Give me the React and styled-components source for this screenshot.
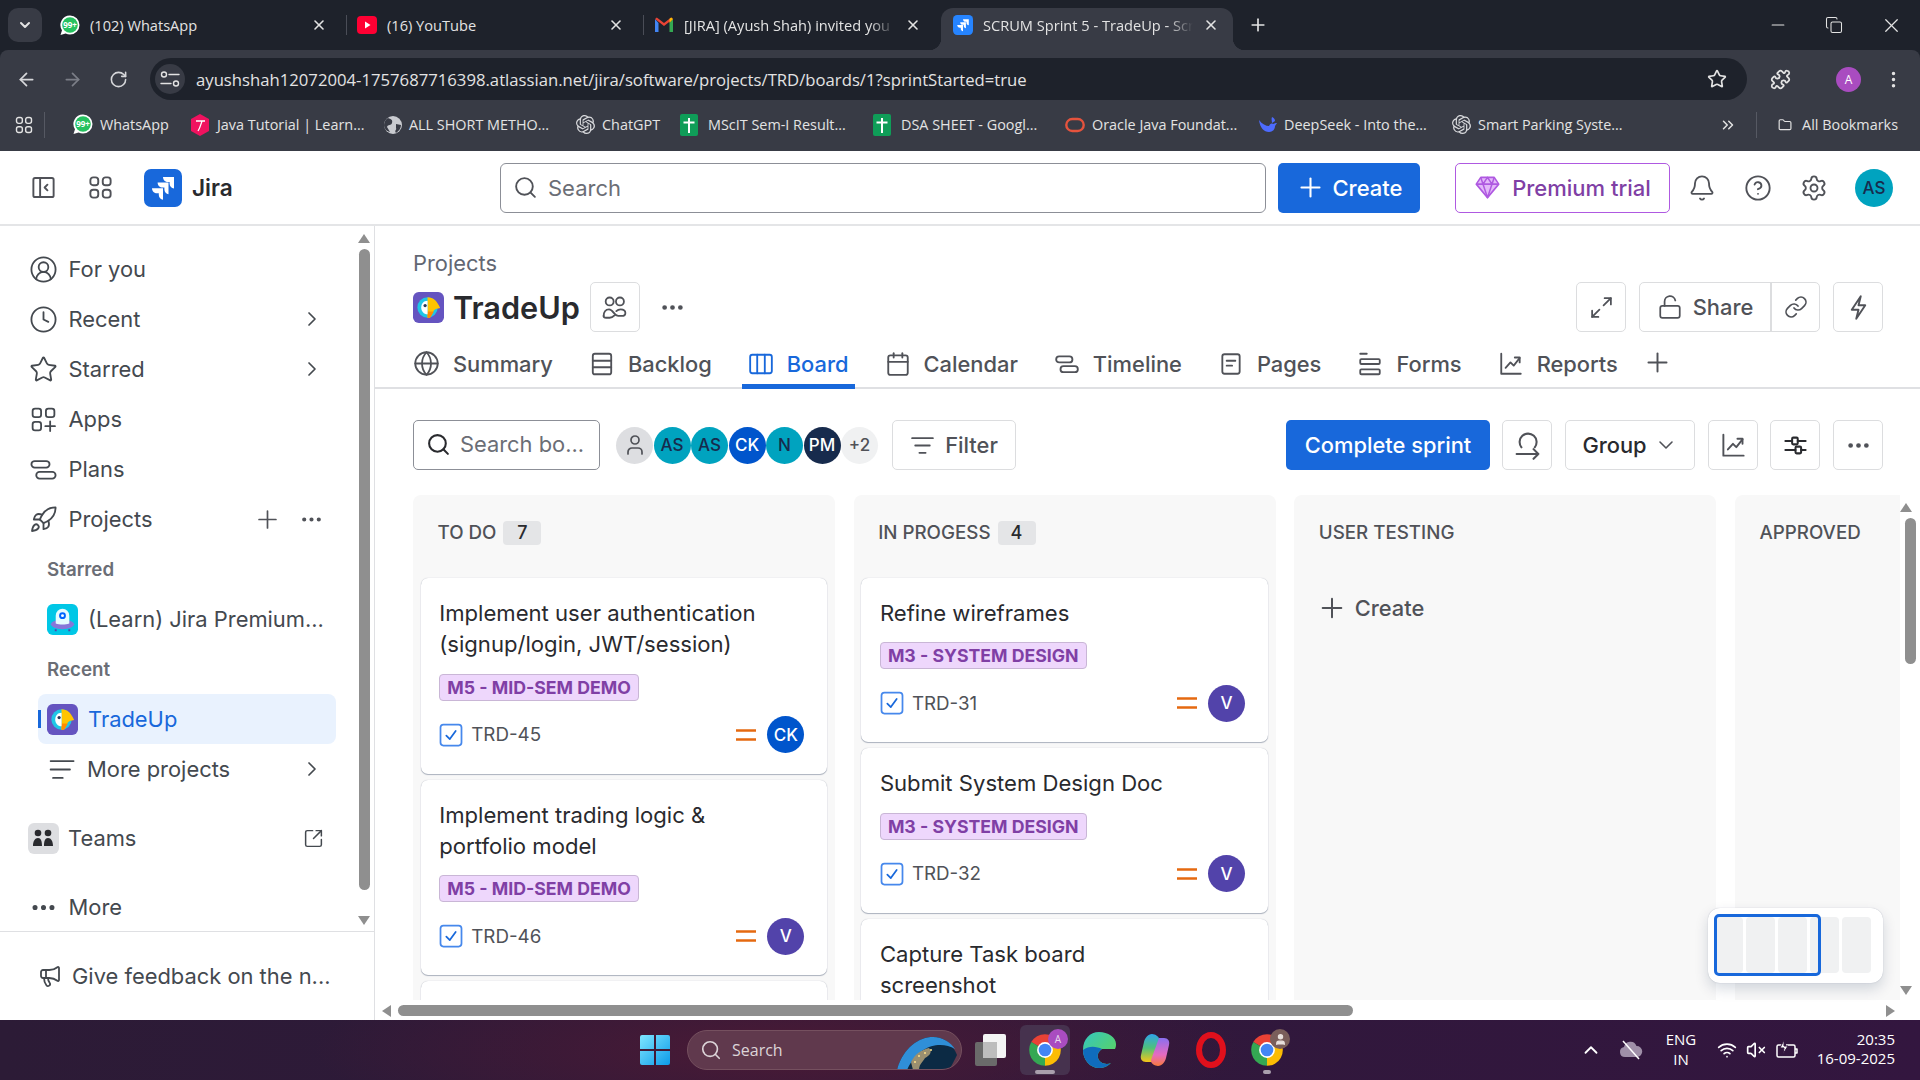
import React from 'react';
import styled, { createGlobalStyle } from 'styled-components';
import {
  ArrowLeft, ArrowRight, Bell, Calendar, ChevronDown, ChevronRight, ChevronUp,
  ChevronsRight, CircleHelp, CircleUserRound, Clock, Copy, Ellipsis, EllipsisVertical,
  Folder, Globe, Link, LockOpen, Maximize2, Megaphone, Minus, Plus, Puzzle, Rocket, RotateCw,
  Search, Settings, SquareArrowOutUpRight, Star, User,
  VolumeX, Wifi, X,
} from 'lucide-react';
import { SiOpenai } from 'react-icons/si';

const GlobalStyle = createGlobalStyle`
  html, body { margin: 0; width: 1920px; height: 1080px; overflow: hidden; background: #fff; }
  * { box-sizing: border-box; }
  #root { width: 1920px; height: 1080px; }
`;

const Page = styled.div`
  width: 1920px;
  height: 1080px;
  display: flex;
  flex-direction: column;
  font-family: Inter, "Liberation Sans", sans-serif;
  color: #44494f;
`;

/* browser chrome */
const Browser = styled.div`
  height: 151px;
  flex-shrink: 0;
  background: #1e222b;
  font-family: "Open Sans", "Noto Sans", sans-serif;
  color: #e3e3e3;
`;
const TabStrip = styled.div`
  height: 50px;
  display: flex;
  align-items: flex-end;
  padding-left: 8px;
`;
const TabMenu = styled.div`
  width: 34px;
  height: 34px;
  margin-bottom: 8px;
  margin-right: 8px;
  border-radius: 10px;
  background: #383b45;
  display: flex;
  align-items: center;
  justify-content: center;
`;
const Tab = styled.div`
  position: relative;
  width: ${(p) => (p.$active ? 292 : 297)}px;
  height: 42px;
  padding-left: ${(p) => (p.$active ? 12 : 10)}px;
  padding-right: ${(p) => (p.$active ? 14 : 20)}px;
  padding-bottom: 8px;
  display: flex;
  align-items: center;
  gap: 10px;
  font-size: 14.6px;
  background: ${(p) => (p.$active ? '#383b45' : 'transparent')};
  border-radius: 12px 12px 0 0;
  &::after {
    content: '';
    position: absolute;
    right: 0;
    top: 7px;
    height: 20px;
    width: ${(p) => (p.$sep ? 1 : 0)}px;
    background: #4a4d57;
  }
  ${(p) => p.$active && `
    &::before, & > i {
      content: '';
      position: absolute;
      bottom: 0;
      width: 12px;
      height: 12px;
    }
    &::before { left: -12px; background: radial-gradient(circle at 0 0, transparent 12px, #383b45 12.5px); }
    & > i { right: -12px; background: radial-gradient(circle at 100% 0, transparent 12px, #383b45 12.5px); }
  `}
`;
const TabTitle = styled.span`
  flex: 1;
  overflow: hidden;
  white-space: nowrap;
  -webkit-mask-image: ${(p) => (p.$fade ? 'linear-gradient(90deg, #000 88%, transparent)' : 'none')};
`;
const NewTab = styled.div`
  margin: 0 0 8px 15px;
  height: 34px;
  display: flex;
  align-items: center;
`;
const WindowButtons = styled.div`
  margin-left: auto;
  height: 50px;
  display: flex;
  align-items: center;
  gap: 37px;
  padding-right: 17px;
`;
const Toolbar = styled.div`
  height: 50px;
  background: #383b45;
  display: flex;
  align-items: flex-end;
  padding-left: 3px;
  border-radius: 8px 8px 0 0;
`;
const NavButton = styled.div`
  width: 46px;
  height: 42px;
  display: flex;
  align-items: center;
  justify-content: center;
  color: ${(p) => (p.$dim ? '#7b7e87' : '#d6d7da')};
`;
const Omnibox = styled.div`
  width: 1597px;
  height: 42px;
  margin-left: 9px;
  border-radius: 21px;
  background: #1e222b;
  display: flex;
  align-items: center;
  padding: 0 20px 0 5px;
  font-size: 16.7px;
`;
const SiteChip = styled.div`
  width: 30px;
  height: 30px;
  border-radius: 50%;
  background: #383b45;
  display: flex;
  align-items: center;
  justify-content: center;
  margin-right: 11px;
`;
const Url = styled.span`
  flex: 1;
  white-space: nowrap;
`;
const ToolbarEnd = styled.div`
  flex: 1;
  height: 42px;
  display: flex;
  align-items: center;
  padding-left: 23px;
`;
const ProfileDot = styled.div`
  width: 25px;
  height: 25px;
  margin: 0 22px 0 45px;
  border-radius: 50%;
  background: #a94cc0;
  color: #fff;
  font-size: 12px;
  display: flex;
  align-items: center;
  justify-content: center;
`;
const Bookmarks = styled.div`
  height: 51px;
  background: #383b45;
  display: flex;
  align-items: center;
  padding: 0 0 2px 14px;
  font-size: 14.4px;
`;
const BarSep = styled.div`
  width: 1px;
  height: 26px;
  background: #565963;
  margin: 0 ${(p) => p.$right}px 0 ${(p) => p.$left}px;
`;
const Bookmark = styled.div`
  width: ${(p) => p.$w}px;
  flex-shrink: 0;
  display: flex;
  align-items: center;
  gap: ${(p) => p.$gap || 7}px;
  white-space: nowrap;
`;

/* jira top bar */
const TopBar = styled.div`
  height: 75px;
  flex-shrink: 0;
  border-bottom: 2px solid #e4e5e7;
  background: #fff;
  display: flex;
  align-items: center;
`;
const TopLeft = styled.div`
  width: 500px;
  padding-left: 30px;
  display: flex;
  align-items: center;
  gap: 30px;
  color: #505258;
`;
const BrandBox = styled.div`
  display: flex;
  align-items: center;
`;
const Brand = styled.span`
  margin-left: 10px;
  font-size: 22.6px;
  font-weight: 600;
  color: #292a2e;
`;
const GlobalSearch = styled.div`
  width: 766px;
  height: 50px;
  border: 1px solid #8c8f97;
  border-radius: 6px;
  display: flex;
  align-items: center;
  gap: 10px;
  padding-left: 12px;
  font-size: 22px;
  color: #6b6e76;
`;
const CreateButton = styled.div`
  width: 142px;
  height: 50px;
  margin-left: 12px;
  border-radius: 5px;
  background: #1868db;
  color: #fff;
  font-size: 22px;
  font-weight: 500;
  display: flex;
  align-items: center;
  justify-content: center;
  gap: 6px;
`;
const PremiumButton = styled.div`
  width: 215px;
  height: 50px;
  margin: 0 4px 0 35px;
  border: 1px solid #af59e1;
  border-radius: 5px;
  color: #803fa5;
  font-size: 22px;
  font-weight: 500;
  display: flex;
  align-items: center;
  justify-content: center;
  gap: 11px;
`;
const TopIcon = styled.div`
  width: 56px;
  display: flex;
  justify-content: center;
  color: #505258;
`;
const TopAvatar = styled.div`
  width: 38px;
  height: 38px;
  margin-left: 13px;
  border-radius: 50%;
  background: #00a3bf;
  color: #172b4d;
  font-size: 17px;
  font-weight: 500;
  display: flex;
  align-items: center;
  justify-content: center;
`;

const Body = styled.div`
  flex: 1;
  min-height: 0;
  display: flex;
`;

/* sidebar */
const Sidebar = styled.aside`
  position: relative;
  width: 375px;
  flex-shrink: 0;
  border-right: 1.5px solid #dfe0e3;
  display: flex;
  flex-direction: column;
  font-size: 21.9px;
`;
const SideNav = styled.nav`
  height: 706px;
  padding-top: 18px;
  border-bottom: 1.5px solid #dfe0e3;
  overflow: hidden;
`;
const SideRow = styled.div`
  position: relative;
  height: 50px;
  display: flex;
  align-items: center;
  gap: 11px;
  margin-top: ${(p) => p.$top || 0}px;
  margin-left: ${(p) => (p.$child ? 38 : 0)}px;
  margin-right: 38px;
  width: ${(p) => (p.$child ? 298 : 336)}px;
  padding-left: ${(p) => (p.$child ? 9 : 28.5)}px;
  padding-right: 12px;
  border-radius: 8px;
  background: ${(p) => (p.$selected ? '#e9f2fe' : 'transparent')};
  color: ${(p) => (p.$selected ? '#1868db' : '#44494f')};
  &::before {
    content: '';
    display: ${(p) => (p.$selected ? 'block' : 'none')};
    position: absolute;
    left: 0;
    top: 16px;
    width: 3px;
    height: 18px;
    background: #1868db;
  }
`;
const SideLabel = styled.span`
  flex: 1;
  white-space: nowrap;
  margin-left: ${(p) => p.$nudge || 0}px;
`;
const SideHeading = styled.div`
  height: 50px;
  padding-left: 47px;
  display: flex;
  align-items: center;
  font-size: 18.75px;
  font-weight: 600;
  color: #6b6e76;
`;
const RowActions = styled.div`
  display: flex;
  align-items: center;
  gap: 17px;
  color: #505258;
`;
const TeamIcon = styled.div`
  width: 31px;
  height: 31px;
  margin: 0 -1.5px 0 -1px;
  border-radius: 6px;
  background: #dddee1;
  display: flex;
  align-items: center;
  justify-content: center;
`;
const Feedback = styled.div`
  flex: 1;
  display: flex;
  align-items: center;
  gap: 10px;
  padding: 0 0 1px 38px;
  white-space: nowrap;
`;
const VBar = styled.div`
  position: absolute;
  left: ${(p) => p.$x}px;
  top: ${(p) => p.$y}px;
  width: 11px;
  height: ${(p) => p.$h}px;
  border-radius: 6px;
  background: #8f8f8f;
`;
const ScrollArrow = styled.div`
  position: absolute;
  left: ${(p) => p.$x}px;
  top: ${(p) => p.$y}px;
  width: 0;
  height: 0;
  border-style: solid;
  border-color: transparent;
  border-width: 5px 6px;
  ${(p) => (p.$down ? 'border-top: 9px solid #8f8f8f; border-bottom-width: 0;' : '')}
  ${(p) => (p.$up ? 'border-bottom: 9px solid #8f8f8f; border-top-width: 0;' : '')}
  ${(p) => (p.$left ? 'border-right: 9px solid #8f8f8f; border-left-width: 0; border-width: 6px 9px 6px 0;' : '')}
  ${(p) => (p.$right ? 'border-left: 9px solid #8f8f8f; border-right-width: 0; border-width: 6px 0 6px 9px;' : '')}
`;

/* main */
const Main = styled.main`
  position: relative;
  flex: 1;
  min-width: 0;
  display: flex;
  flex-direction: column;
  overflow: hidden;
`;
const Crumb = styled.div`
  padding: 20px 0 0 38px;
  height: 56px;
  font-size: 21.875px;
  line-height: 34px;
  color: #626773;
`;
const TitleRow = styled.div`
  height: 50px;
  padding: 0 37px 0 38px;
  display: flex;
  align-items: center;
`;
const ProjectTitle = styled.h1`
  margin: 0 10px 0 9px;
  font-size: 30.65px;
  font-weight: 600;
  color: #292a2e;
`;
const IconButton = styled.div`
  width: ${(p) => p.$w || 50}px;
  height: 50px;
  flex-shrink: 0;
  border: 1px solid #dcdddf;
  border-radius: 5px;
  display: flex;
  align-items: center;
  justify-content: center;
  color: #505258;
  margin-left: ${(p) => p.$left || 0}px;
`;
const PlainDots = styled.div`
  margin-left: 19px;
  color: #505258;
  display: flex;
`;
const Spacer = styled.div`
  flex: 1;
`;
const ShareGroup = styled.div`
  width: 181px;
  height: 50px;
  margin-left: 13px;
  border: 1px solid #dcdddf;
  border-radius: 5px;
  display: flex;
  color: #505258;
  font-size: 21.875px;
  font-weight: 500;
`;
const ShareMain = styled.div`
  width: 132px;
  border-right: 2px solid #dcdddf;
  display: flex;
  align-items: center;
  justify-content: center;
  gap: 10px;
`;
const ShareLink = styled.div`
  flex: 1;
  display: flex;
  align-items: center;
  justify-content: center;
`;
const TabsBar = styled.div`
  height: 57px;
  padding: 11px 0 0 32px;
  display: flex;
  align-items: stretch;
  gap: 24px;
  border-bottom: 2px solid #dfe0e3;
`;
const ViewTab = styled.div`
  display: flex;
  align-items: center;
  gap: 13px;
  padding: 0 6px;
  margin-bottom: -2px;
  font-size: 21.875px;
  font-weight: 500;
  color: ${(p) => (p.$active ? '#1868db' : '#505258')};
  border-bottom: 5px solid ${(p) => (p.$active ? '#1868db' : 'transparent')};
`;
const TabAdd = styled.div`
  display: flex;
  align-items: center;
  margin-left: -6px;
  padding-bottom: 5px;
  color: #505258;
`;
const BoardTools = styled.div`
  height: 50px;
  margin-top: 31px;
  padding: 0 37px 0 38px;
  display: flex;
  align-items: center;
`;
const BoardSearch = styled.div`
  width: 187px;
  height: 50px;
  border: 1px solid #8c8f97;
  border-radius: 5px;
  display: flex;
  align-items: center;
  gap: 9px;
  padding: 0 0 2px 12px;
  font-size: 21.875px;
  color: #6b6e76;
  white-space: nowrap;
`;
const AvatarStack = styled.div`
  margin: 0 14px 0 16px;
  display: flex;
`;
const Avatar = styled.div`
  width: 37px;
  height: 37px;
  flex-shrink: 0;
  margin-left: ${(p) => p.$overlap || 0}px;
  border-radius: 50%;
  background: ${(p) => p.$bg};
  color: ${(p) => p.$fg};
  font-size: 17px;
  font-weight: 500;
  display: flex;
  align-items: center;
  justify-content: center;
`;
const TextButton = styled.div`
  height: 50px;
  width: ${(p) => p.$w}px;
  margin-left: ${(p) => p.$left || 0}px;
  border: 1px solid #dcdddf;
  border-radius: 5px;
  display: flex;
  align-items: center;
  justify-content: center;
  gap: ${(p) => p.$gap || 10}px;
  font-size: 21.875px;
  font-weight: 500;
  color: ${(p) => p.$color || '#505258'};
`;
const PrimaryButton = styled.div`
  width: 204px;
  height: 50px;
  border-radius: 5px;
  background: #1868db;
  color: #fff;
  font-size: 21.875px;
  font-weight: 500;
  display: flex;
  align-items: center;
  justify-content: center;
`;
const Board = styled.div`
  height: 505px;
  margin: 25px 20px 0 38px;
  display: flex;
  gap: 18.75px;
  overflow: hidden;
`;
const Column = styled.section`
  width: 421.875px;
  flex-shrink: 0;
  height: 100%;
  background: #f8f8f8;
  border-radius: 8px 8px 0 0;
  padding: 0 7.5px;
  overflow: hidden;
`;
const ColumnHead = styled.div`
  height: 75px;
  padding: 0 0 0 ${(p) => p.$pad}px;
  margin-bottom: ${(p) => p.$gap || 8}px;
  display: flex;
  align-items: center;
  gap: 7px;
  font-size: 18.75px;
  font-weight: 500;
  color: #505258;
  white-space: nowrap;
`;
const Count = styled.span`
  min-width: 38px;
  height: 24px;
  border-radius: 4px;
  background: #e4e5e7;
  color: #292a2e;
  font-size: 18px;
  display: flex;
  align-items: center;
  justify-content: center;
`;
const Cards = styled.div`
  display: flex;
  flex-direction: column;
  gap: 6px;
`;
const Card = styled.article`
  background: #fff;
  border-radius: 7px;
  box-shadow: 0 1px 1px rgba(9, 30, 66, 0.3), 0 0 1px rgba(9, 30, 66, 0.3);
  padding: 20px 23px 20.5px 18.75px;
  flex-shrink: 0;
  min-height: ${(p) => p.$min || 0}px;
`;
const CardTitle = styled.div`
  max-width: 321px;
  font-size: 22.1px;
  line-height: 31.25px;
  color: #292a2e;
`;
const Lozenge = styled.span`
  display: inline-flex;
  align-items: center;
  height: 27px;
  margin-top: 13px;
  padding: 0 7px;
  border: 1px solid #c9b6d6;
  border-radius: 4px;
  background: #eed7fc;
  color: #803fa5;
  font-size: 17.7px;
  font-weight: 700;
  white-space: nowrap;
`;
const CardFoot = styled.div`
  margin-top: 15.5px;
  height: 37px;
  display: flex;
  align-items: center;
  gap: 6px;
  font-size: 18.75px;
  color: #505258;
`;
const CheckBox = styled.span`
  display: flex;
  margin-left: -2px;
`;
const CardKey = styled.span`
  flex: 1;
`;
const ColumnCreate = styled.div`
  display: flex;
  align-items: center;
  gap: 7px;
  padding-left: 14px;
  height: 50px;
  font-size: 21.875px;
  font-weight: 500;
  color: #505258;
`;
const HBarTrack = styled.div`
  position: absolute;
  left: 23px;
  top: 779px;
  width: 955px;
  height: 11px;
  border-radius: 6px;
  background: #8f8f8f;
`;
const Minimap = styled.div`
  position: absolute;
  left: 1333px;
  top: 682px;
  width: 175px;
  height: 75px;
  background: #fff;
  border-radius: 12px;
  box-shadow: 0 6px 14px rgba(9, 30, 66, 0.16), 0 0 1px rgba(9, 30, 66, 0.3);
  display: flex;
  gap: 3px;
  padding: 9px 10px 10px 6px;
`;
const MiniColumn = styled.div`
  width: 29px;
  border-radius: 4px;
  background: #f0f1f2;
`;
const MiniWindow = styled.div`
  position: absolute;
  left: 6px;
  top: 6px;
  width: 107px;
  height: 62px;
  border: 3px solid #1868db;
  border-radius: 5px;
`;

/* taskbar */
const Taskbar = styled.footer`
  height: 60px;
  flex-shrink: 0;
  background: radial-gradient(ellipse 620px 120px at 780px 50%, #4a1a35 0%, rgba(47, 26, 58, 0) 75%), linear-gradient(90deg, #2c1b36, #33163f);
  display: flex;
  align-items: center;
  padding-left: 640px;
  color: #fff;
  font-family: "Open Sans", "Noto Sans", sans-serif;
`;
const TaskSearch = styled.div`
  position: relative;
  width: 275px;
  height: 40px;
  margin-left: 17px;
  border-radius: 20px;
  background: #60394d;
  border: 1px solid #75505f;
  display: flex;
  align-items: center;
  gap: 10px;
  padding-left: 12px;
  font-size: 16px;
  color: #dcd4d8;
  overflow: hidden;
`;
const TaskApp = styled.div`
  position: relative;
  width: ${(p) => p.$w || 56}px;
  height: 50px;
  flex-shrink: 0;
  margin-left: ${(p) => p.$left || 0}px;
  border-radius: 6px;
  background: ${(p) => (p.$active ? '#46324e' : 'transparent')};
  display: flex;
  align-items: center;
  justify-content: center;
  &::after {
    content: '';
    display: ${(p) => (p.$run ? 'block' : 'none')};
    position: absolute;
    bottom: 1px;
    left: 50%;
    transform: translateX(-50%);
    width: ${(p) => (p.$active ? 20 : 8)}px;
    height: 4px;
    border-radius: 2px;
    background: #a99fad;
  }
`;
const AppBadge = styled.div`
  position: absolute;
  top: 4px;
  right: ${(p) => p.$right}px;
  width: 20px;
  height: 20px;
  border-radius: 50%;
  background: ${(p) => p.$bg};
  color: #e8d9ee;
  font-size: 10px;
  display: flex;
  align-items: center;
  justify-content: center;
`;
const Tray = styled.div`
  margin-left: auto;
  padding-right: 25px;
  display: flex;
  align-items: center;
`;
const TrayGroup = styled.div`
  display: flex;
  align-items: center;
  gap: 17px;
`;
const Lang = styled.div`
  width: 42px;
  margin: 0 15px 2px 17px;
  font-size: 15px;
  line-height: 20px;
  text-align: center;
`;
const TrayIcons = styled.div`
  display: flex;
  align-items: center;
  gap: 9px;
`;
const TrayClock = styled.div`
  width: 80px;
  margin: 0 0 3px 16px;
  font-size: 15px;
  line-height: 19px;
  text-align: right;
  white-space: nowrap;
`;

/* drawn icons */
const Svg = ({ size = 25, color = 'currentColor', w = 1.7, children }) => (
  <svg width={size} height={size} viewBox="0 0 24 24" fill="none" stroke={color} strokeWidth={w} strokeLinecap="round" strokeLinejoin="round" style={{ flexShrink: 0 }}>
    {children}
  </svg>
);
const Squares = ({ size }) => (
  <Svg size={size}>
    <rect x="3" y="3" width="7" height="7" rx="2.5" /><rect x="14" y="3" width="7" height="7" rx="2.5" />
    <rect x="3" y="14" width="7" height="7" rx="2.5" /><rect x="14" y="14" width="7" height="7" rx="2.5" />
  </Svg>
);
const PanelIcon = () => (
  <Svg size={27}>
    <rect x="3" y="3.5" width="18" height="17" rx="1.5" /><path d="M9 3.5v17M15.5 9.5 13 12l2.5 2.5" />
  </Svg>
);
const AppsIcon = ({ size }) => (
  <Svg size={size} w={1.5}><rect x="3" y="3" width="7" height="7" rx="2" /><rect x="14" y="3" width="7" height="7" rx="2" /><rect x="3" y="14" width="7" height="7" rx="2" /><path d="M17.5 13.500v8M13.500 17.500h8" /></Svg>
);
const PlansIcon = ({ size, w }) => (
  <Svg size={size} w={w}><rect x="2" y="5" width="15" height="5.500" rx="2.750" /><rect x="6" y="14" width="16" height="5.500" rx="2.750" /></Svg>
);
const LinesIcon = ({ size }) => (
  <Svg size={size} w={1.5}><path d="M3 5h19M3 12h16M5 19h8" /></Svg>
);
const FilterIcon = () => (
  <Svg><path d="M2 5h20M5 12h14M9 19h6" /></Svg>
);
const BacklogIcon = () => (
  <Svg size={26}><rect x="3.500" y="2.500" width="17" height="19" rx="2" /><path d="M3.500 9h17M3.500 15h17" /></Svg>
);
const BoardIcon = () => (
  <Svg size={26}><rect x="2" y="3.500" width="20" height="17" rx="2" /><path d="M8.500 3.500v17M15.500 3.500v17" /></Svg>
);
const FormsIcon = () => (
  <Svg size={26}><path d="M3 2.500h6" /><rect x="3" y="7.500" width="18" height="4.500" rx="1" /><rect x="3" y="17" width="18" height="4.500" rx="1" /></Svg>
);
const PagesIcon = () => (
  <Svg size={26}><rect x="4" y="3" width="16" height="18" rx="2" /><path d="M8 9h8M8 13.500h5" /></Svg>
);
const ReportsIcon = ({ size = 26 }) => (
  <Svg size={size}><path d="M3 2.500V21h18" /><path d="m7 15.500 4.500-5 3 3L20 6.500" /><path d="M15.500 6H20v4.500" /></Svg>
);
const TuneIcon = () => (
  <Svg size={24} w={1.4}><path d="M11 7.500h10M3 16.500h10" /><circle cx="6" cy="7.500" r="2.500" /><circle cx="18" cy="16.500" r="2.500" /></Svg>
);
const BoardSliders = () => (
  <Svg size={27} color="#292a2e" w={1.8}><path d="M3 8h6M14 8h7M3 16h9M17 16h4" /><rect x="9" y="5" width="5" height="6" rx="1" /><rect x="12" y="13" width="5" height="6" rx="1" /></Svg>
);
const TeamPair = () => (
  <Svg size={29} w={1.5}><circle cx="8" cy="7" r="3.300" /><circle cx="16.500" cy="7" r="3.300" /><path d="M3 19c0-3 1.500-5.500 4.500-5.500 3.500 0 4 5.500 7.500 5.500h3c2 0 3-1 3-2.500 0-2-1.500-3-4-3-1.500 0-2.500.5-3.500 1.500" /><path d="M3 19c0 1 1 1.500 2 1.500h3c2 0 3-1 4-2" /></Svg>
);
const SprintIcon = () => (
  <Svg size={29}><path d="M7 13.500A7 7 0 1 1 18 13.500" /><path d="M3 19h18M17 15l4 4-4 4" /></Svg>
);
const Check = () => (
  <Svg size={28} color="#4688ec" w={1.5}>
    <rect x="3" y="3" width="18" height="18" rx="2.500" /><path d="m8 12.500 3 3 5-7" stroke="#1868db" />
  </Svg>
);
const Medium = () => (
  <svg width="20" height="12" viewBox="0 0 20 12" style={{ flexShrink: 0, marginRight: 5 }}>
    <path d="M0 1.500h20M0 10.500h20" stroke="#e56910" strokeWidth="2.400" />
  </svg>
);
const JiraLogo = () => (
  <svg width="38" height="38" viewBox="0 0 38 38">
    <rect width="38" height="38" rx="7" fill="#1868db" />
    <path fill="#fff" d="M30 8H19c0 3 2.400 5 5 5h1.600v1.800c0 2.600 2 4.600 4.400 4.800zM24.500 13.600H13.600c0 3 2.300 5 5 5h1.800v1.800c0 2.600 2 4.600 4.100 4.800zM19 19.200H8c0 3 2.400 5 5 5h1.800V26c0 2.600 2 4.600 4.200 4.800z" />
  </svg>
);
const TradeUpLogo = ({ size = 31 }) => (
  <svg width={size} height={size} viewBox="0 0 32 32" style={{ flexShrink: 0 }}>
    <rect width="32" height="32" rx="6" fill="#6554c0" />
    <circle cx="15" cy="16" r="10.500" fill="#1fc6e6" />
    <path d="M15 5.500c6 0 10 4 13 11-3 .5-5 1-6.500 2.500L18 26c-1 .4-2 .5-3 .5z" fill="#ffc400" />
    <path d="M15 20h6.500L18 26c-1 .4-2 .5-3 .5z" fill="#ff8b00" />
    <path d="M15 9c-4 0-6.500 3-6.500 7s2.500 7 6.500 7z" fill="#fff" />
    <circle cx="12.500" cy="14" r="1.700" fill="#253858" />
  </svg>
);
const LearnLogo = () => (
  <svg width="31" height="31" viewBox="0 0 32 32" style={{ flexShrink: 0 }}>
    <rect width="32" height="32" rx="6" fill="#00c7e6" />
    <ellipse cx="16" cy="21" rx="12" ry="5" fill="#8777d9" />
    <path d="M9 20v-8a7 7 0 0 1 14 0v8c-4 1.500-10 1.500-14 0z" fill="#e6fcff" />
    <circle cx="16" cy="12" r="3.500" fill="#0065ff" /><circle cx="16" cy="12" r="1.500" fill="#fff" />
    <path d="M9 26v2M23 26v2" stroke="#5243aa" strokeWidth="2" />
  </svg>
);
const WhatsAppIcon = () => (
  <svg width="20" height="21" viewBox="0 0 20 21" style={{ flexShrink: 0 }}>
    <path d="M10 0.500a9.500 9.500 0 0 1 0 19c-1.600 0-3-.4-4.400-1.100L.5 20l1.500-4.800A9.500 9.500 0 0 1 10 .5z" fill="#fff" />
    <circle cx="10" cy="10" r="7.800" fill="#25c15f" />
    <text x="10" y="13" fontSize="8" fontWeight="700" fontFamily="Open Sans" textAnchor="middle" fill="#fff">99+</text>
  </svg>
);
const YouTubeIcon = () => (
  <svg width="20" height="20" viewBox="0 0 20 20" style={{ flexShrink: 0 }}>
    <rect y="1" width="20" height="18" rx="4" fill="#ff0033" /><path d="M8 6.500 13.500 10 8 13.500z" fill="#fff" />
  </svg>
);
const GmailIcon = () => (
  <svg width="20" height="20" viewBox="0 0 20 20" style={{ flexShrink: 0 }}>
    <path d="M1 4v13h3.500V8z" fill="#4285f4" /><path d="M15.500 8v9H19V4z" fill="#34a853" />
    <path d="M1 4 10 11l9-7-1.800-1.500L10 8 2.800 2.500z" fill="#ea4335" /><path d="M15.500 8 19 4l-1.800-1.500-1.700 1.300z" fill="#fbbc04" />
  </svg>
);
const JiraFavicon = () => (
  <svg width="20" height="20" viewBox="0 0 38 38" style={{ flexShrink: 0 }}>
    <rect width="38" height="38" rx="8" fill="#2684ff" />
    <path fill="#fff" d="M30 8H19c0 3 2.400 5 5 5h1.600v1.800c0 2.600 2 4.600 4.400 4.800zM24.500 13.600H13.600c0 3 2.300 5 5 5h1.800v1.800c0 2.600 2 4.600 4.100 4.800zM19 19.200H8c0 3 2.400 5 5 5h1.800V26c0 2.600 2 4.600 4.200 4.800z" />
  </svg>
);
const JavaIcon = () => (
  <svg width="20" height="22" viewBox="0 0 20 22" style={{ flexShrink: 0 }}>
    <path d="M10 0 19 5v12l-9 5-9-5V5z" fill="#f0125f" /><path d="M6 7h9M12 7c-1 3-2 7-4 10" stroke="#fff" strokeWidth="1.300" fill="none" />
  </svg>
);
const GlobeFill = () => (
  <svg width="18" height="18" viewBox="0 0 18 18" style={{ flexShrink: 0 }}>
    <circle cx="9" cy="9" r="9" fill="#c9cbd0" /><path d="M4 2c3 1 5 2 4 5s-4 1-5 4l3 5C2 15 0 12 0 9c0-3 2-6 4-7zM12 8l5 1c0 3-2 6-5 8-2-3 1-3 0-5z" fill="#383b45" />
  </svg>
);
const SheetIcon = () => (
  <svg width="18" height="22" viewBox="0 0 18 22" style={{ flexShrink: 0, marginRight: 3 }}>
    <rect width="18" height="22" rx="2" fill="#0f9d58" /><path d="M9 4v15M3.500 8.500h11" stroke="#fff" strokeWidth="2" />
  </svg>
);
const OracleIcon = () => (
  <svg width="20" height="16" viewBox="0 0 20 16" style={{ flexShrink: 0 }}>
    <rect x="1.300" y="2" width="17.400" height="12" rx="6" fill="none" stroke="#e5533d" strokeWidth="2.400" />
  </svg>
);
const WhaleIcon = () => (
  <svg width="19" height="18" viewBox="0 0 19 18" style={{ flexShrink: 0 }}>
    <path d="M1 4c1 8 5 12 10 12 3 0 6-2 6-6l2-3c-1 0-3 .5-4 1-2-1-3 0-4 2-3 0-7-2-10-6z" fill="#4d6bfe" />
    <path d="M14 1c2 1 3 2 3 4l-3 2c0-2-1-4 0-6z" fill="#4d6bfe" />
  </svg>
);
const ChromeIcon = () => (
  <svg width="38" height="38" viewBox="0 0 48 48">
    <path d="M24 24 6.680 14A20 20 0 0 1 41.320 14z" fill="#e94235" />
    <path d="M24 24 41.320 14A20 20 0 0 1 24 44z" fill="#fbbc04" />
    <path d="M24 24V44A20 20 0 0 1 6.680 14z" fill="#34a853" />
    <circle cx="24" cy="24" r="10" fill="#fff" /><circle cx="24" cy="24" r="8" fill="#4285f4" />
  </svg>
);
const EdgeIcon = () => (
  <svg width="34" height="38" viewBox="0 0 34 38">
    <defs>
      <linearGradient id="edgeA" x1="0" y1="0" x2="1" y2="1"><stop offset="0" stopColor="#34c6c0" /><stop offset="1" stopColor="#63d64c" /></linearGradient>
    </defs>
    <path d="M17 1C8 1 1 8 1 19c0 10 7 18 16 18 5 0 9-2 12-5-4 2-11 1-13-5-1-4 1-7 4-9h13c1-2 1-4 1-5C34 6 26 1 17 1z" fill="url(#edgeA)" />
    <path d="M1 19c0 10 7 18 16 18 5 0 9-2 12-5-4 2-11 1-13-5-1-4 1-7 4-9-5-2-12-4-19 1z" fill="#0f6cbd" />
  </svg>
);
const CopilotIcon = () => (
  <svg width="30" height="34" viewBox="0 0 30 34">
    <defs>
      <linearGradient id="copA" x1="0" y1="0" x2="0" y2="1"><stop offset="0" stopColor="#2fa4ea" /><stop offset="0.5" stopColor="#4fc07a" /><stop offset="1" stopColor="#f5c518" /></linearGradient>
      <linearGradient id="copB" x1="0" y1="0" x2="0" y2="1"><stop offset="0" stopColor="#8a6ff0" /><stop offset="0.6" stopColor="#e66ac0" /><stop offset="1" stopColor="#f77a3c" /></linearGradient>
    </defs>
    <path d="M12 1c-4 0-7 4-8 8L1 22c-1 4 1 7 5 7h6L19 7c1-3-4-6-7-6z" fill="url(#copA)" />
    <path d="M18 33c4 0 7-4 8-8l3-13c1-4-1-7-5-7h-5l-8 22c-1 3 4 6 7 6z" fill="url(#copB)" />
  </svg>
);
const OperaIcon = () => (
  <svg width="30" height="36" viewBox="0 0 30 36">
    <ellipse cx="15" cy="18" rx="12" ry="15" fill="none" stroke="#e0101c" strokeWidth="6" />
  </svg>
);
const WinIcon = () => (
  <svg width="30" height="30" viewBox="0 0 30 30" style={{ flexShrink: 0 }}>
    <defs>
      <linearGradient id="winA" x1="0" y1="0" x2="1" y2="1"><stop offset="0" stopColor="#7fe6ff" /><stop offset="1" stopColor="#0c9be8" /></linearGradient>
    </defs>
    <path d="M0 2a2 2 0 0 1 2-2h12v14H0zM16 0h12a2 2 0 0 1 2 2v12H16zM0 16h14v14H2a2 2 0 0 1-2-2zM16 16h14v12a2 2 0 0 1-2 2H16z" fill="url(#winA)" />
  </svg>
);
const EarthArt = () => (
  <svg width="62" height="38" viewBox="0 0 62 38" style={{ position: 'absolute', right: 2, top: 1 }}>
    <path d="M0 38C6 16 22 5 36 5c12 0 20 8 24 18-3 6-5 10-8 15z" fill="#0c2a44" />
    <path d="M0 38C6 16 22 5 36 5c10 0 18 6 22 12C44 9 22 12 10 38z" fill="#2f8fd8" />
    <path d="M14 30c4-8 10-12 18-14 4 4 0 8-4 10-2 4-6 6-6 12h-6z" fill="#9a8f70" />
    <circle cx="22" cy="24" r="1" fill="#ffe28a" /><circle cx="28" cy="21" r="1" fill="#ffe28a" /><circle cx="18" cy="30" r="1" fill="#ffe28a" /><circle cx="34" cy="18" r="1" fill="#ffe28a" />
  </svg>
);
const TaskViewIcon = () => (
  <svg width="32" height="32" viewBox="0 0 32 32"><rect x="0" y="8" width="22" height="24" rx="2" fill="#6a6a6a" /><rect x="8" y="0" width="23" height="24" rx="2" fill="#f4f4f4" /><rect x="8" y="8" width="14" height="16" fill="#bdbdbd" /></svg>
);
const CloudSlash = () => (
  <svg width="24" height="22" viewBox="0 0 24 22">
    <path d="M6 18a5 5 0 0 1-1-9.900A6.500 6.500 0 0 1 17.500 7 5.500 5.500 0 0 1 18 18z" fill="#9f8fa8" />
    <path d="M4 2l16 18" stroke="#fff" strokeWidth="1.500" />
  </svg>
);
const BatteryIcon = () => (
  <svg width="24" height="22" viewBox="0 0 24 22" fill="none" stroke="#fff" strokeWidth="1.500" strokeLinejoin="round">
    <path d="M7 6H3.500A1.500 1.500 0 0 0 2 7.500v9A1.500 1.500 0 0 0 3.500 18h15a1.500 1.500 0 0 0 1.500-1.500v-9A1.500 1.500 0 0 0 18.500 6H11" />
    <path d="M20 10h2v4h-2" /><path d="M9 1 5 9h4l-1 6 5-8H9z" fill="#fff" stroke="#33163f" strokeWidth="1" />
  </svg>
);
const DiamondIcon = () => (
  <svg width="27" height="27" viewBox="0 0 24 24" fill="#c97cf4" stroke="#af59e1" strokeWidth="1.400" strokeLinejoin="round">
    <path d="M6 3h12l4 6-10 12L2 9z" fill="#e3b8f9" /><path d="M2 9h20M8 9l4 12 4-12M6 3l2 6 4-6 4 6 2-6" fill="none" />
  </svg>
);
const BoltIcon = () => (
  <Svg size={27}><path d="M14 2 6 14h6l-2 8 8-12h-6z" /></Svg>
);
const TeamsGlyph = () => (
  <svg width="20" height="18" viewBox="0 0 20 18" fill="#292a2e"><circle cx="5" cy="4" r="3.300" /><circle cx="15" cy="4" r="3.300" /><path d="M0 17c0-5 2-8 5-8s4 3 4 8zM11 17c0-5 1-8 4-8s5 3 5 8z" /></svg>
);

const bookmarks = [
  { w: 117, icon: <WhatsAppIcon />, label: 'WhatsApp' },
  { w: 194, icon: <JavaIcon />, label: 'Java Tutorial | Learn...' },
  { w: 192, icon: <GlobeFill />, label: 'ALL SHORT METHO...' },
  { w: 104, icon: <SiOpenai size={19} color="#d8d9dc" />, label: 'ChatGPT' },
  { w: 193, icon: <SheetIcon />, label: 'MScIT Sem-I Result...' },
  { w: 192, icon: <SheetIcon />, label: 'DSA SHEET - Googl...' },
  { w: 193, icon: <OracleIcon />, label: 'Oracle Java Foundat...' },
  { w: 194, icon: <WhaleIcon />, label: 'DeepSeek - Into the...' },
  { w: 267, icon: <SiOpenai size={19} color="#d8d9dc" />, label: 'Smart Parking Syste...' },
];

const viewTabs = [
  { label: 'Summary', icon: <Globe size={27} strokeWidth={1.6} /> },
  { label: 'Backlog', icon: <BacklogIcon /> },
  { label: 'Board', icon: <BoardIcon />, active: true },
  { label: 'Calendar', icon: <Calendar size={26} strokeWidth={1.7} /> },
  { label: 'Timeline', icon: <PlansIcon size={26} /> },
  { label: 'Pages', icon: <PagesIcon /> },
  { label: 'Forms', icon: <FormsIcon /> },
  { label: 'Reports', icon: <ReportsIcon /> },
];

const todoCards = [
  { title: 'Implement user authentication (signup/login, JWT/session)', tag: 'M5 - MID-SEM DEMO', id: 'TRD-45', who: 'CK', bg: '#0055cc' },
  { title: 'Implement trading logic & portfolio model', tag: 'M5 - MID-SEM DEMO', id: 'TRD-46', who: 'V', bg: '#5243aa' },
];
const progressCards = [
  { title: 'Refine wireframes', tag: 'M3 - SYSTEM DESIGN', id: 'TRD-31', who: 'V', bg: '#5243aa' },
  { title: 'Submit System Design Doc', tag: 'M3 - SYSTEM DESIGN', id: 'TRD-32', who: 'V', bg: '#5243aa' },
];

const IssueCard = ({ card }) => (
  <Card>
    <CardTitle>{card.title}</CardTitle>
    <Lozenge>{card.tag}</Lozenge>
    <CardFoot>
      <CheckBox><Check /></CheckBox>
      <CardKey>{card.id}</CardKey>
      <Medium />
      <Avatar $bg={card.bg} $fg="#fff">{card.who}</Avatar>
    </CardFoot>
  </Card>
);

export default function App() {
  return (
    <Page>
      <GlobalStyle />
      <Browser>
        <TabStrip>
          <TabMenu><ChevronDown size={16} strokeWidth={3} /></TabMenu>
          <Tab $sep><WhatsAppIcon /><TabTitle>(102) WhatsApp</TabTitle><X size={16} strokeWidth={2.4} /></Tab>
          <Tab $sep><YouTubeIcon /><TabTitle>(16) YouTube</TabTitle><X size={16} strokeWidth={2.4} /></Tab>
          <Tab><GmailIcon /><TabTitle $fade>[JIRA] (Ayush Shah) invited you</TabTitle><X size={16} strokeWidth={2.4} /></Tab>
          <Tab $active><i /><JiraFavicon /><TabTitle $fade>SCRUM Sprint 5 - TradeUp - Scr</TabTitle><X size={16} strokeWidth={2.4} /></Tab>
          <NewTab><Plus size={20} strokeWidth={2} /></NewTab>
          <WindowButtons>
            <Minus size={20} strokeWidth={1.4} />
            <Copy size={18} strokeWidth={1.4} />
            <X size={23} strokeWidth={1.3} />
          </WindowButtons>
        </TabStrip>
        <Toolbar>
          <NavButton><ArrowLeft size={21} /></NavButton>
          <NavButton $dim><ArrowRight size={21} /></NavButton>
          <NavButton><RotateCw size={19} /></NavButton>
          <Omnibox>
            <SiteChip><TuneIcon /></SiteChip>
            <Url>ayushshah12072004-1757687716398.atlassian.net/jira/software/projects/TRD/boards/1?sprintStarted=true</Url>
            <Star size={20} />
          </Omnibox>
          <ToolbarEnd>
            <Puzzle size={21} />
            <ProfileDot>A</ProfileDot>
            <EllipsisVertical size={21} />
          </ToolbarEnd>
        </Toolbar>
        <Bookmarks>
          <Squares size={20} />
          <BarSep $left={10} $right={28} />
          {bookmarks.map((b) => (
            <Bookmark key={b.label} $w={b.w}>{b.icon}{b.label}</Bookmark>
          ))}
          <ChevronsRight size={18} />
          <BarSep $left={19} $right={21} />
          <Bookmark $w={120} $gap={10}><Folder size={22} />All Bookmarks</Bookmark>
        </Bookmarks>
      </Browser>

      <TopBar>
        <TopLeft>
          <PanelIcon />
          <Squares size={27} />
          <BrandBox><JiraLogo /><Brand>Jira</Brand></BrandBox>
        </TopLeft>
        <GlobalSearch><Search size={25} strokeWidth={1.8} color="#505258" />Search</GlobalSearch>
        <CreateButton><Plus size={31} strokeWidth={1.6} />Create</CreateButton>
        <PremiumButton><DiamondIcon />Premium trial</PremiumButton>
        <TopIcon><Bell size={28} strokeWidth={1.6} /></TopIcon>
        <TopIcon><CircleHelp size={28} strokeWidth={1.6} /></TopIcon>
        <TopIcon><Settings size={28} strokeWidth={1.6} /></TopIcon>
        <TopAvatar>AS</TopAvatar>
      </TopBar>

      <Body>
        <Sidebar>
          <SideNav>
            <SideRow><CircleUserRound size={29} strokeWidth={1.5} /><SideLabel>For you</SideLabel></SideRow>
            <SideRow><Clock size={29} strokeWidth={1.5} /><SideLabel>Recent</SideLabel><ChevronRight size={24} strokeWidth={1.7} /></SideRow>
            <SideRow><Star size={29} strokeWidth={1.5} /><SideLabel>Starred</SideLabel><ChevronRight size={24} strokeWidth={1.7} /></SideRow>
            <SideRow><AppsIcon size={29} /><SideLabel>Apps</SideLabel></SideRow>
            <SideRow><PlansIcon size={29} w={1.5} /><SideLabel>Plans</SideLabel></SideRow>
            <SideRow>
              <Rocket size={29} strokeWidth={1.5} />
              <SideLabel>Projects</SideLabel>
              <RowActions><Plus size={29} strokeWidth={1.4} /><Ellipsis size={25} strokeWidth={2} /></RowActions>
            </SideRow>
            <SideHeading>Starred</SideHeading>
            <SideRow $child><LearnLogo /><SideLabel $nudge={-1}>(Learn) Jira Premium...</SideLabel></SideRow>
            <SideHeading>Recent</SideHeading>
            <SideRow $child $selected><TradeUpLogo /><SideLabel $nudge={-1}>TradeUp</SideLabel></SideRow>
            <SideRow $child><LinesIcon size={29} /><SideLabel>More projects</SideLabel><ChevronRight size={24} strokeWidth={1.7} /></SideRow>
            <SideRow $top={19}>
              <TeamIcon><TeamsGlyph /></TeamIcon>
              <SideLabel>Teams</SideLabel>
              <SquareArrowOutUpRight size={21} strokeWidth={1.7} />
            </SideRow>
            <SideRow $top={19}><Ellipsis size={29} strokeWidth={2.2} /><SideLabel>More</SideLabel></SideRow>
          </SideNav>
          <Feedback><Megaphone size={24} strokeWidth={1.8} />Give feedback on the n...</Feedback>
          <ScrollArrow $up $x={358} $y={8} />
          <VBar $x={359} $y={23} $h={641} />
          <ScrollArrow $down $x={358} $y={690} />
        </Sidebar>

        <Main>
          <Crumb>Projects</Crumb>
          <TitleRow>
            <TradeUpLogo />
            <ProjectTitle>TradeUp</ProjectTitle>
            <IconButton><TeamPair /></IconButton>
            <PlainDots><Ellipsis size={27} strokeWidth={2.2} /></PlainDots>
            <Spacer />
            <IconButton><Maximize2 size={25} strokeWidth={1.7} /></IconButton>
            <ShareGroup>
              <ShareMain><LockOpen size={26} strokeWidth={1.6} />Share</ShareMain>
              <ShareLink><Link size={24} strokeWidth={1.7} /></ShareLink>
            </ShareGroup>
            <IconButton $left={13}><BoltIcon /></IconButton>
          </TitleRow>
          <TabsBar>
            {viewTabs.map((t) => (
              <ViewTab key={t.label} $active={t.active}>{t.icon}{t.label}</ViewTab>
            ))}
            <TabAdd><Plus size={31} strokeWidth={1.5} /></TabAdd>
          </TabsBar>
          <BoardTools>
            <BoardSearch><Search size={25} strokeWidth={2} color="#292a2e" />Search bo...</BoardSearch>
            <AvatarStack>
              <Avatar $bg="#dddee1" $fg="#505258"><User size={24} strokeWidth={1.7} /></Avatar>
              <Avatar $bg="#00a3bf" $fg="#172b4d" $overlap={0.5}>AS</Avatar>
              <Avatar $bg="#00a3bf" $fg="#172b4d" $overlap={0.5}>AS</Avatar>
              <Avatar $bg="#0055cc" $fg="#fff" $overlap={0.5}>CK</Avatar>
              <Avatar $bg="#00a3bf" $fg="#172b4d" $overlap={0.5}>N</Avatar>
              <Avatar $bg="#172b4d" $fg="#fff" $overlap={0.5}>PM</Avatar>
              <Avatar $bg="#f0f1f2" $fg="#505258" $overlap={0.5}>+2</Avatar>
            </AvatarStack>
            <TextButton $w={124}><FilterIcon />Filter</TextButton>
            <Spacer />
            <PrimaryButton>Complete sprint</PrimaryButton>
            <IconButton $left={12}><SprintIcon /></IconButton>
            <TextButton $w={130} $left={13} $gap={7} $color="#292a2e">Group<ChevronDown size={24} strokeWidth={1.6} color="#505258" /></TextButton>
            <IconButton $left={13}><ReportsIcon size={27} /></IconButton>
            <IconButton $left={12}><BoardSliders /></IconButton>
            <IconButton $left={13}><Ellipsis size={27} strokeWidth={2.2} /></IconButton>
          </BoardTools>
          <Board>
            <Column>
              <ColumnHead $pad={17}>TO DO<Count>7</Count></ColumnHead>
              <Cards>
                {todoCards.map((c) => <IssueCard key={c.id} card={c} />)}
                <Card $min={60} />
              </Cards>
            </Column>
            <Column>
              <ColumnHead $pad={17}>IN PROGESS<Count>4</Count></ColumnHead>
              <Cards>
                {progressCards.map((c) => <IssueCard key={c.id} card={c} />)}
                <Card $min={100}><CardTitle>Capture Task board screenshot</CardTitle></Card>
              </Cards>
            </Column>
            <Column>
              <ColumnHead $pad={17} $gap={13}>USER TESTING</ColumnHead>
              <ColumnCreate><Plus size={32} strokeWidth={1.5} />Create</ColumnCreate>
            </Column>
            <Column>
              <ColumnHead $pad={17}>APPROVED</ColumnHead>
            </Column>
          </Board>
          <ScrollArrow $up $x={1525} $y={277} />
          <VBar $x={1530} $y={292} $h={146} />
          <ScrollArrow $down $x={1525} $y={760} />
          <ScrollArrow $left $x={7} $y={779} />
          <HBarTrack />
          <ScrollArrow $right $x={1511} $y={779} />
          <Minimap>
            <MiniColumn /><MiniColumn /><MiniColumn /><MiniColumn /><MiniColumn />
            <MiniWindow />
          </Minimap>
        </Main>
      </Body>

      <Taskbar>
        <WinIcon />
        <TaskSearch><Search size={22} strokeWidth={1.8} />Search<EarthArt /></TaskSearch>
        <TaskApp $w={58}><TaskViewIcon /></TaskApp>
        <TaskApp $w={50} $active $run>
          <ChromeIcon /><AppBadge $bg="#a94cc0" $right={2}>A</AppBadge>
        </TaskApp>
        <TaskApp $left={1}><EdgeIcon /></TaskApp>
        <TaskApp><CopilotIcon /></TaskApp>
        <TaskApp><OperaIcon /></TaskApp>
        <TaskApp $run>
          <ChromeIcon /><AppBadge $bg="#7a5e5a" $right={5}><User size={13} fill="#e8e0dc" stroke="#e8e0dc" /></AppBadge>
        </TaskApp>
        <Tray>
          <TrayGroup>
            <ChevronUp size={22} strokeWidth={2} />
            <CloudSlash />
          </TrayGroup>
          <Lang>ENG<br />IN</Lang>
          <TrayIcons>
            <Wifi size={20} />
            <VolumeX size={20} />
            <BatteryIcon />
          </TrayIcons>
          <TrayClock>20:35<br />16-09-2025</TrayClock>
        </Tray>
      </Taskbar>
    </Page>
  );
}
